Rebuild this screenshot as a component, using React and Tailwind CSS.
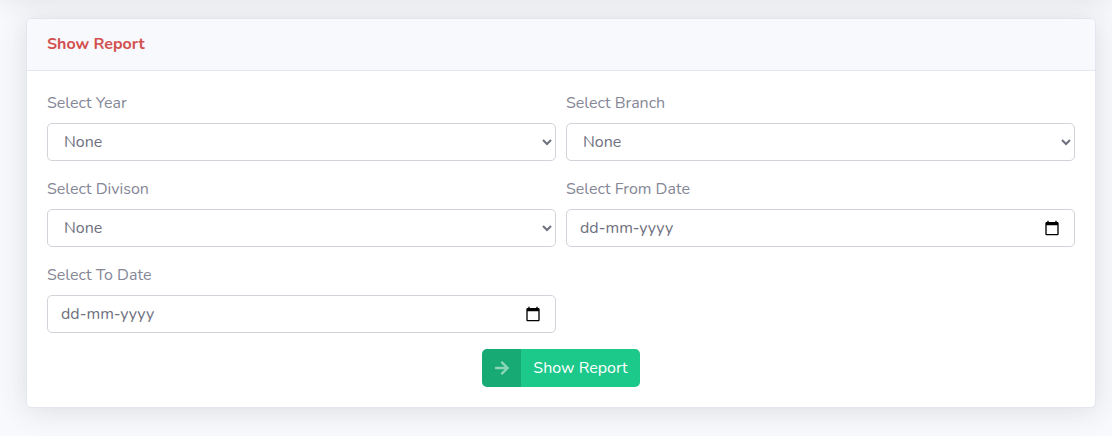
import { useId } from "react";
import { FaArrowRight } from "react-icons/fa";

const controlBorder = "rounded-[5px] border border-[#d1d3da] bg-white";

function SelectField({ label }) {
  const id = useId();
  return (
    <div>
      <label htmlFor={id} className="mb-2 block">{label}</label>
      <select id={id} className={`block h-[38px] w-full px-3 text-[#6e707e] ${controlBorder}`}>
        <option>None</option>
      </select>
    </div>
  );
}

function CalendarIcon() {
  return (
    <svg viewBox="0 0 24 24" className="size-4" fill="#000" aria-hidden="true">
      <path d="M20 3h-1V1h-2v2H7V1H5v2H4c-1.100 0-2 .9-2 2v16c0 1.100.9 2 2 2h16c1.100 0 2-.9 2-2V5c0-1.100-.9-2-2-2zm0 18H4V8h16v13z" />
    </svg>
  );
}

function DateField({ label }) {
  const id = useId();
  return (
    <div>
      <label htmlFor={id} className="mb-2 block">{label}</label>
      <div className={`flex h-[38px] items-center pl-[13px] pr-[14px] ${controlBorder}`}>
        <input
          id={id}
          type="text"
          placeholder="dd-mm-yyyy"
          className="min-w-0 flex-1 bg-transparent text-[#6e707e] outline-none placeholder:text-[#6e707e]"
        />
        <button type="button" aria-label="Open calendar">
          <CalendarIcon />
        </button>
      </div>
    </div>
  );
}

export default function App() {
  return (
    <div className="flex min-h-screen flex-col overflow-hidden bg-[#f8f9fc] font-['Nunito','Lato',sans-serif] text-base text-[#858796]">
      <header className="-mt-[70px] h-16 shrink-0 bg-white shadow-[0_2px_28px_rgba(58,59,69,0.15)]" />
      <main className="pb-7 pl-[26px] pr-4 pt-6">
        <section className="rounded-[5px] border border-[#e3e6f0] bg-white shadow-[0_2px_28px_rgba(58,59,69,0.15)]">
          <div className="rounded-t-[5px] border-b border-[#e3e6f0] bg-[#f8f9fc] px-5 pb-[14px] pt-[13px]">
            <h1 className="font-bold text-[#d2504f]">Show Report</h1>
          </div>
          <form className="p-5" onSubmit={(e) => e.preventDefault()}>
            <div className="grid grid-cols-2 gap-x-[10px] gap-y-4">
              <SelectField label="Select Year" />
              <SelectField label="Select Branch" />
              <SelectField label="Select Divison" />
              <DateField label="Select From Date" />
              <DateField label="Select To Date" />
            </div>
            <div className="mt-4 flex justify-center">
              <button type="submit" className="flex h-[38px] items-stretch overflow-hidden rounded-[5px] bg-[#1cc88a] text-white">
                <span className="flex w-[39px] items-center justify-center bg-black/15 text-white/50">
                  <FaArrowRight className="size-4" />
                </span>
                <span className="flex items-center px-3">Show Report</span>
              </button>
            </div>
          </form>
        </section>
      </main>
    </div>
  );
}
